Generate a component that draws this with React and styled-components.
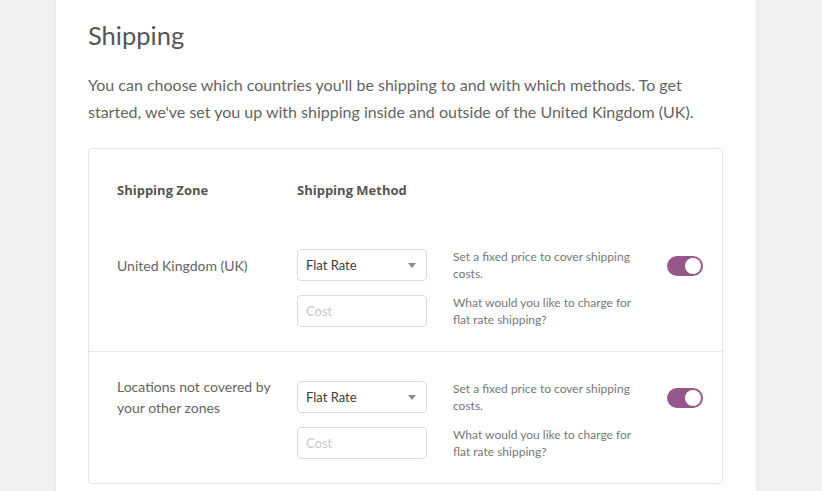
import React from "react";
import styled, { createGlobalStyle } from "styled-components";

const Global = createGlobalStyle`
  html, body { margin: 0; padding: 0; background: #f1f1f1; }
  body { font-family: Lato, "Open Sans", sans-serif; }
  * { box-sizing: border-box; }
`;

const Page = styled.div`
  width: 822px;
  height: 491px;
  overflow: hidden;
  background: #f1f1f1;
  display: flex;
  justify-content: flex-start;
  padding-left: 56px;
`;

const Panel = styled.div`
  width: 700px;
  background: #fff;
  box-shadow: 0 0 1px rgba(0, 0, 0, 0.15);
  padding: 19px 32px 0 32px;
`;

const Title = styled.h1`
  margin: 0;
  font-size: 25.5px;
  line-height: 32px;
  font-weight: 400;
  color: #555;
`;

const Intro = styled.p`
  margin: 20px 0 23px;
  font-size: 16px;
  line-height: 27px;
  color: #646464;
`;

const Card = styled.div`
  width: 635px;
  border: 1px solid #e5e5e5;
  border-radius: 4px;
  background: #fff;
`;

const Header = styled.div`
  display: grid;
  grid-template-columns: 180px 1fr;
  padding: 32px 28px 21px;
`;

const HeadCell = styled.div`
  font-family: "Open Sans", Lato, sans-serif;
  font-size: 13px;
  line-height: 18px;
  font-weight: 700;
  color: #555;
`;

const Row = styled.div`
  display: grid;
  grid-template-columns: 180px 130px 180px 1fr;
  grid-template-rows: 32px 32px;
  row-gap: 14px;
  column-gap: 0;
  padding: 29px 19px 24px 28px;
  border-top: ${(p) => (p.$first ? "none" : "1px solid #e8e8e8")};
`;

const Zone = styled.div`
  grid-row: 1;
  display: flex;
  align-items: center;
  font-size: 14px;
  line-height: 21px;
  color: #646464;
  padding-right: 20px;
  white-space: pre-line;
`;

const Select = styled.div`
  grid-column: 2;
  height: 32px;
  border: 1px solid #dcdcdc;
  border-radius: 4px;
  display: flex;
  align-items: center;
  justify-content: space-between;
  padding: 0 10px 0 8px;
  font-size: 13px;
  color: #3c3c3c;
`;

const Caret = styled.span`
  width: 0;
  height: 0;
  border-left: 4px solid transparent;
  border-right: 4px solid transparent;
  border-top: 5px solid #8a8a8a;
`;

const Input = styled.div`
  grid-column: 2;
  grid-row: 2;
  height: 32px;
  border: 1px solid #dcdcdc;
  border-radius: 4px;
  display: flex;
  align-items: center;
  padding: 0 8px;
  font-size: 13px;
  color: #c8c8c8;
`;

const Desc = styled.div`
  grid-column: 3;
  grid-row: ${(p) => p.$row};
  margin-left: 26px;
  display: flex;
  align-items: center;
  font-size: 12px;
  line-height: 17px;
  color: #777;
  width: 185px;
`;

const ToggleCell = styled.div`
  grid-column: 4;
  grid-row: 1;
  display: flex;
  align-items: center;
  justify-content: flex-end;
  padding-top: 2px;
`;

const Toggle = styled.div`
  width: 36px;
  height: 20px;
  border-radius: 10px;
  background: #96588a;
  position: relative;
  &::after {
    content: "";
    position: absolute;
    right: 2px;
    top: 2px;
    width: 16px;
    height: 16px;
    border-radius: 50%;
    background: #fff;
  }
`;

const zones = [
  { name: "United Kingdom (UK)" },
  { name: "Locations not covered by\nyour other zones" },
];

export default function App() {
  return (
    <>
      <Global />
      <Page>
        <Panel>
          <Title>Shipping</Title>
          <Intro>
            You can choose which countries you'll be shipping to and with which methods. To get
            started, we've set you up with shipping inside and outside of the United Kingdom (UK).
          </Intro>
          <Card>
            <Header>
              <HeadCell>Shipping Zone</HeadCell>
              <HeadCell>Shipping Method</HeadCell>
            </Header>
            {zones.map((z, i) => (
              <Row key={i} $first={i === 0}>
                <Zone>{z.name}</Zone>
                <Select>
                  Flat Rate
                  <Caret />
                </Select>
                <Input>Cost</Input>
                <Desc $row={1}>Set a fixed price to cover shipping costs.</Desc>
                <Desc $row={2}>What would you like to charge for flat rate shipping?</Desc>
                <ToggleCell>
                  <Toggle />
                </ToggleCell>
              </Row>
            ))}
          </Card>
        </Panel>
      </Page>
    </>
  );
}
